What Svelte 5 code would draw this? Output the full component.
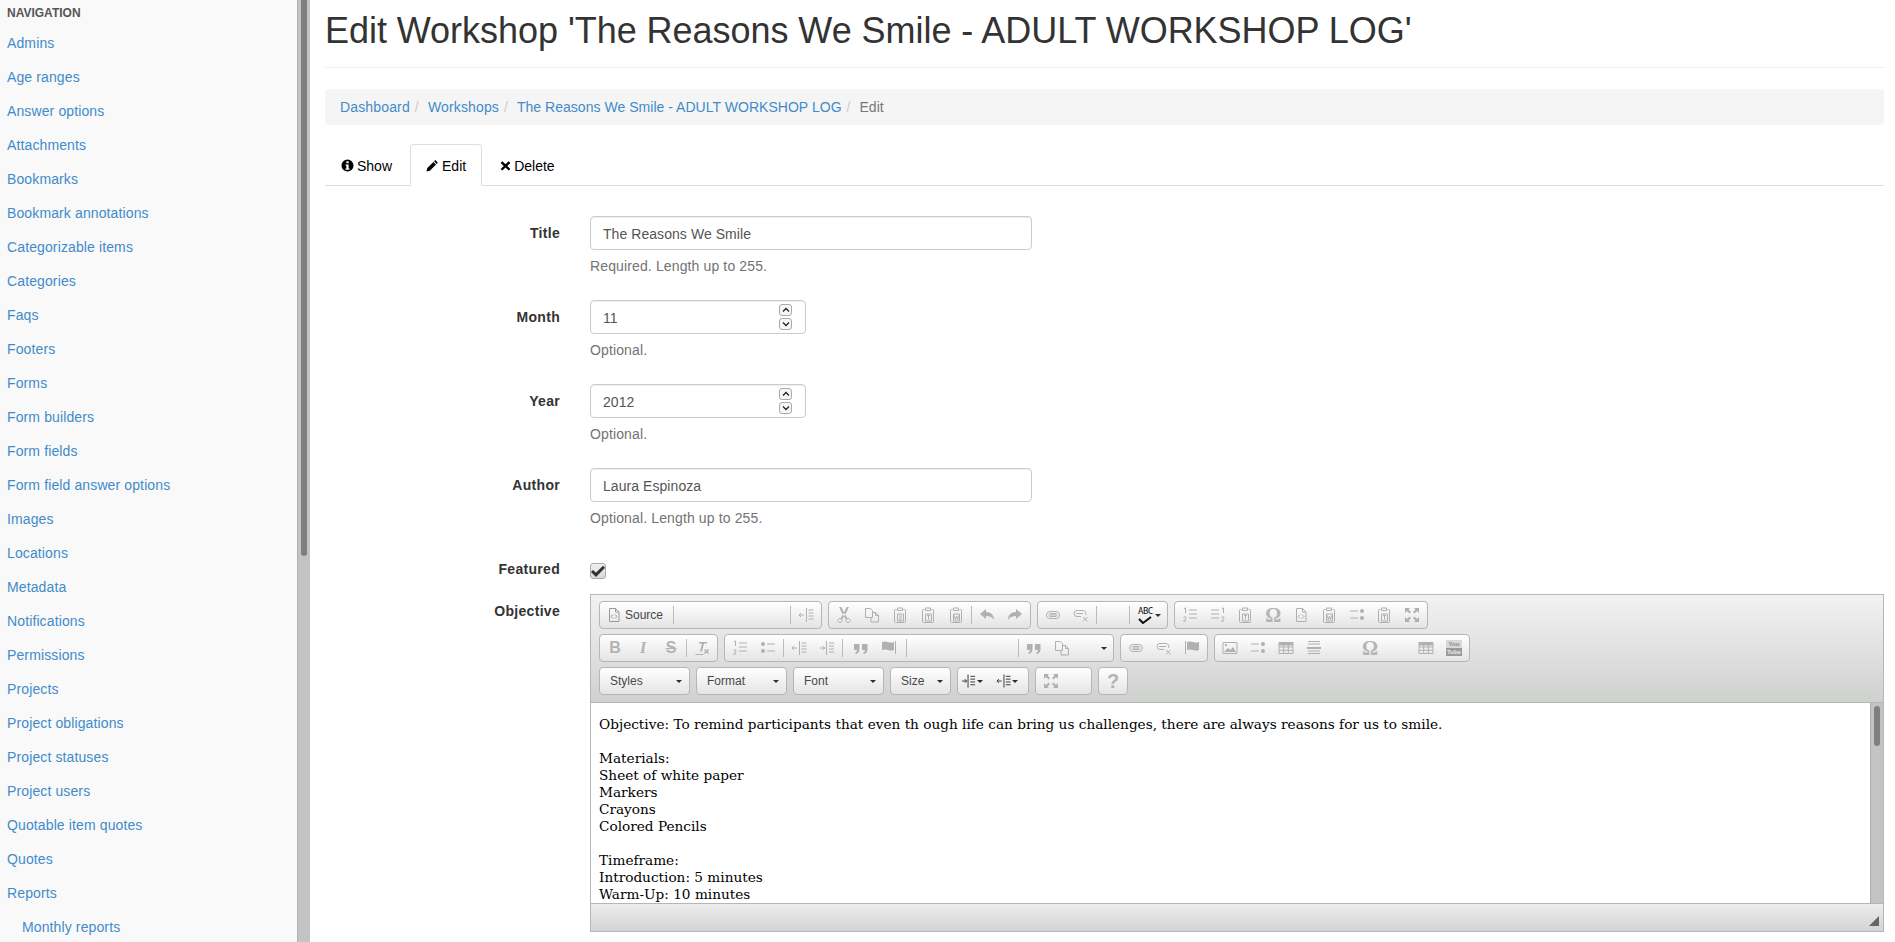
<script>
	const navItems = [
		'Admins', 'Age ranges', 'Answer options', 'Attachments', 'Bookmarks', 'Bookmark annotations',
		'Categorizable items', 'Categories', 'Faqs', 'Footers', 'Forms', 'Form builders', 'Form fields',
		'Form field answer options', 'Images', 'Locations', 'Metadata', 'Notifications', 'Permissions',
		'Projects', 'Project obligations', 'Project statuses', 'Project users', 'Quotable item quotes',
		'Quotes', 'Reports'
	];

	// s = stroked path, f = filled path, both on a 16x16 box
	const icons = {
		source: { s: 'M3.5 1.5h6l3.5 3.5v9.5h-9.5zM9.5 1.5v3.5h3.5M7 7.5l-2 2 2 2M9 7.5l2 2-2 2' },
		outdent: { s: 'M8.5 1v14M10.5 3h5M10.5 6h5M10.5 9h5M10.5 12h5M1 8h5M3 6l-2 2 2 2' },
		indent: { s: 'M7.5 1v14M10 3h5M10 6h5M10 9h5M10 12h5M1 8h5M4 6l2 2-2 2' },
		cut: {
			s: 'M4 11.500a2 2 0 1 0 .1 0zM12 11.500a2 2 0 1 0 .1 0z',
			f: 'M3 0l2-.5 3.500 7 3 5-1.500 1-3.500-5.500zM13 0l-2-.5-3.500 7-3 5 1.500 1 3.500-5.500z'
		},
		copy: { s: 'M1.500 1.500h5l2 2v7h-7zM8.500 5.500h3l3 3v6.500h-7.500v-4.500M11.500 5.500v3h3' },
		paste: { s: 'M4.500 2.500h-1a1 1 0 0 0-1 1v11a1 1 0 0 0 1 1h9a1 1 0 0 0 1-1v-11a1 1 0 0 0-1-1h-1M5.500 1h5v2.500h-5zM5.500 7h6v7h-6zM7 9h3M7 11h3M7 13h3' },
		pasteT: { s: 'M4.500 2.500h-1a1 1 0 0 0-1 1v11a1 1 0 0 0 1 1h9a1 1 0 0 0 1-1v-11a1 1 0 0 0-1-1h-1M5.500 1h5v2.500h-5zM5.500 7h6v7h-6zM7 8.500h3M8.500 8.500v4' },
		pasteW: { s: 'M4.500 2.500h-1a1 1 0 0 0-1 1v11a1 1 0 0 0 1 1h9a1 1 0 0 0 1-1v-11a1 1 0 0 0-1-1h-1M5.500 1h5v2.500h-5zM5.500 7h6v7h-6zM6.500 8.500l.8 4 1.200-3 1.200 3 .8-4' },
		undo: { f: 'M1 7l6-5v3c5 0 8 3 8 8-2-3-4-4-8-4v3z' },
		redo: { f: 'M15 7l-6-5v3c-5 0-8 3-8 8 2-3 4-4 8-4v3z' },
		link: { s: 'M5 4.500h6a3.500 3.500 0 0 1 0 7h-6a3.500 3.500 0 0 1 0-7zM3.500 8h9M4.500 6.500h7M4.500 9.500h7' },
		unlink: { s: 'M4 3.500h6a3 3 0 0 1 2.500 4.500M8 9.500h-4a3 3 0 0 1 0-6M3 6.500h7M10 10l4.500 4.500M14.500 10l-4.500 4.500' },
		ol: { s: 'M7 3h8M7 7h8M7 11h8M2 1.500l1.500-.5v5M1.500 10.500q2-1.500 2.500 0t-2.500 3.500h2.500' },
		ul: { s: 'M7 4h8M7 11h8', f: 'M1 4a2 2 0 1 0 4 0 2 2 0 1 0-4 0zM1 11a2 2 0 1 0 4 0 2 2 0 1 0-4 0z' },
		rtlOl: { s: 'M1 3h8M1 7h8M1 11h8M12 1.500l1.500-.5v5M11.500 10.500q2-1.500 2.500 0t-2.500 3.500h2.500' },
		rtlUl: { s: 'M1 4h8M1 11h8', f: 'M11 4a2 2 0 1 0 4 0 2 2 0 1 0-4 0zM11 11a2 2 0 1 0 4 0 2 2 0 1 0-4 0z' },
		flag: { s: 'M14.500 1v13', f: 'M1 2q3-1 6 0t6 0v8q-3 1-6 0t-6 0z' },
		flagR: { s: 'M1.500 1v13', f: 'M3 2q3-1 6 0t6 0v8q-3 1-6 0t-6 0z' },
		quote: { f: 'M1 4h5.500v5q0 4-3.500 5l-1-1q2-1 2-3h-3zM9 4h5.500v5q0 4-3.500 5l-1-1q2-1 2-3h-3z' },
		removeFormat: {
			s: 'M1.500 14.500h8',
			f: 'M5 2h8v1.500h-3l-2 8h-2l2-8h-3zM10 10l1-1 1.500 1.500 1.500-1.500 1 1-1.500 1.500 1.500 1.500-1 1-1.500-1.500-1.500 1.500-1-1 1.500-1.500z'
		},
		maximize: {
			f: 'M1 1h5l-1.500 1.500 2.500 2.500-1.500 1.500-2.500-2.500-2 2zM15 1h-5l1.500 1.500-2.500 2.500 1.500 1.500 2.500-2.500 2 2zM1 15h5l-1.500-1.500 2.500-2.500-1.500-1.500-2.500 2.500-2-2zM15 15h-5l1.500-1.500-2.500-2.500 1.500-1.500 2.500 2.500 2-2z'
		},
		image: { s: 'M1 2.500h14v11h-14z', f: 'M2 12l4-4 2.500 2 2.500-3 3 5zM3 4h2v2h-2z' },
		table: { s: 'M1 2.500h14v11h-14zM1 7h14M1 10.250h14M5.700 5v8.500M10.300 5v8.500', f: 'M1 2.500h14v3h-14z' },
		hr: { s: 'M2 1.500h12M2 4h12M2 11h12M2 13.500h12', f: 'M1 7h14v2h-14z' }
	};

	const glyphs = {
		bold: { t: 'B', c: 'g-bold' },
		italic: { t: 'I', c: 'g-italic' },
		strike: { t: 'S', c: 'g-strike' },
		omega: { t: 'Ω', c: 'g-omega' },
		help: { t: '?', c: 'g-help' }
	};

	// number = blank space, 'sep' = thin divider, anything else = a 28px button
	const rowOne = [
		{ items: ['source-label', 'sep', 114, 'sep', 'outdent'] },
		{ items: ['cut', 'copy', 'paste', 'pasteT', 'pasteW', 'sep', 'undo', 'redo'], width: 203 },
		{ items: ['link', 'unlink', 'sep', 30, 'sep', 'spell'], width: 131 },
		{ items: ['ol', 'rtlOl', 'pasteT', 'omega', 'source', 'pasteW', 'rtlUl', 'pasteT', 'maximize'], width: 254 }
	];
	const rowTwo = [
		{ items: ['bold', 'italic', 'strike', 'sep', 'removeFormat'] },
		{ items: ['ol', 'ul', 'sep', 'outdent', 'indent', 'sep', 3, 'quote', 'flag', 2, 'sep', 109, 'sep', 'quote', 'copy', 20, 'caret'] },
		{ items: ['link', 'unlink', 'flagR'] },
		{ items: ['image', 'rtlUl', 'table', 'hr', 28, 'omega', 28, 'table', 'youtube'] }
	];

	const combos = [
		{ label: 'Styles', width: 91 },
		{ label: 'Format', width: 91 },
		{ label: 'Font', width: 91 },
		{ label: 'Size', width: 61 }
	];

	const fields = [
		{ label: 'Title', value: 'The Reasons We Smile', help: 'Required. Length up to 255.' },
		{ label: 'Month', value: '11', help: 'Optional.', number: true },
		{ label: 'Year', value: '2012', help: 'Optional.', number: true },
		{ label: 'Author', value: 'Laura Espinoza', help: 'Optional. Length up to 255.' }
	];
</script>

{#snippet icon(name)}
	<svg class="ic" viewBox="0 0 16 16" width="16" height="16">
		{#if icons[name].s}<path d={icons[name].s} fill="none" stroke="currentColor" stroke-width="1" />{/if}
		{#if icons[name].f}<path d={icons[name].f} fill="currentColor" />{/if}
	</svg>
{/snippet}

{#snippet group(g)}
	<div class="group" style={g.width ? `width: ${g.width}px` : undefined}>
		{#each g.items as item}
			{#if typeof item === 'number'}
				<span style="width: {item}px"></span>
			{:else if item === 'sep'}
				<span class="sep"></span>
			{:else if item === 'source-label'}
				<span class="source-btn">{@render icon('source')}<span>Source</span></span>
			{:else if item === 'spell'}
				<span class="spell">
					<span class="abc">ABC</span>
					<svg class="tick" viewBox="0 0 14 8" width="14" height="8"><path d="M1 3l4 4 8-6" fill="none" stroke="#111" stroke-width="2" /></svg>
					<i class="caret"></i>
				</span>
			{:else if item === 'caret'}
				<span class="caret-wrap"><i class="caret"></i></span>
			{:else if item === 'youtube'}
				<span class="btn"><span class="yt"><b>You</b><b class="tube">Tube</b></span></span>
			{:else if glyphs[item]}
				<span class="btn"><span class={glyphs[item].c}>{glyphs[item].t}</span></span>
			{:else}
				<span class="btn">{@render icon(item)}</span>
			{/if}
		{/each}
	</div>
{/snippet}

<div class="page">
	<aside class="sidebar">
		<div class="nav-title">NAVIGATION</div>
		<ul class="nav">
			{#each navItems as item}
				<li><a href="#top">{item}</a></li>
			{/each}
			<li class="sub"><a href="#top">Monthly reports</a></li>
		</ul>
	</aside>
	<div class="page-scroll"><div class="page-thumb"></div></div>

	<main class="main">
		<h1>Edit Workshop 'The Reasons We Smile - ADULT WORKSHOP LOG'</h1>
		<ol class="breadcrumb">
			<li><a href="#top">Dashboard</a></li>
			<li><a href="#top">Workshops</a></li>
			<li><a href="#top">The Reasons We Smile - ADULT WORKSHOP LOG</a></li>
			<li class="current">Edit</li>
		</ol>

		<div class="tabs">
			<a class="tab" href="#top">
				<svg viewBox="0 0 14 14" width="13" height="13"><path fill-rule="evenodd" d="M7 .5a6.500 6.500 0 1 0 0 13 6.500 6.500 0 0 0 0-13zM5.800 2.500h2.400v2.200h-2.400zM5 6h3.200v4.200h1v1.300h-4.400v-1.300h1v-2.900h-.8z" fill="#000" /></svg>
				Show
			</a>
			<a class="tab active" href="#top">
				<svg viewBox="0 0 14 14" width="13" height="13"><path d="M10 1.200l2.800 2.800-1.300 1.300-2.800-2.800zM8 3.200l2.800 2.800-6.600 6.600-3.700.9.900-3.700z" fill="#000" /></svg>
				Edit
			</a>
			<a class="tab" href="#top">
				<svg viewBox="0 0 14 14" width="11" height="13"><path d="M3 1.500l4 4 4-4 2.200 2.200-4 3.800 4 3.800-2.200 2.200-4-4-4 4-2.200-2.200 4-3.800-4-3.800z" fill="#000" /></svg>
				Delete
			</a>
		</div>

		<form class="form">
			{#each fields as f}
				<div class="row">
					<label class="label" for={f.label}>{f.label}</label>
					<div class="control">
						<div class="input-wrap" class:short={f.number}>
							<input id={f.label} class="input" value={f.value} readonly />
							{#if f.number}
								<span class="spinner">
									<span><svg viewBox="0 0 8 6" width="8" height="6"><path d="M1 4.500l3-3 3 3" fill="none" stroke="#222" stroke-width="1.300" /></svg></span>
									<span><svg viewBox="0 0 8 6" width="8" height="6"><path d="M1 1.500l3 3 3-3" fill="none" stroke="#222" stroke-width="1.300" /></svg></span>
								</span>
							{/if}
						</div>
						<p class="help">{f.help}</p>
					</div>
				</div>
			{/each}

			<div class="row row-check">
				<span class="label">Featured</span>
				<div class="check">
					<svg viewBox="0 0 16 16" width="16" height="16"><path d="M2 8l4 3.800 8-8" fill="none" stroke="#2d3238" stroke-width="3" /></svg>
				</div>
			</div>

			<div class="row row-editor">
				<span class="label">Objective</span>
				<div class="editor">
					<div class="toolbar">
						<div class="tb-row">
							{#each rowOne as g}{@render group(g)}{/each}
						</div>
						<div class="tb-row">
							{#each rowTwo as g}{@render group(g)}{/each}
						</div>
						<div class="tb-row">
							{#each combos as c}
								<div class="combo" style="width: {c.width}px"><span>{c.label}</span><i class="caret"></i></div>
							{/each}
							<div class="group active-icons">
								<span class="drop">{@render icon('indent')}<i class="caret"></i></span>
								<span class="drop">{@render icon('outdent')}<i class="caret"></i></span>
							</div>
							<div class="group max-group"><span class="btn">{@render icon('maximize')}</span></div>
							<div class="group help-group"><span class="btn"><span class="g-help">?</span></span></div>
						</div>
					</div>
					<div class="content-wrap">
						<div class="content">
							<p>Objective: To remind participants that even th ough life can bring us challenges, there are always reasons for us to smile.</p>
							<p>Materials:<br />Sheet of white paper<br />Markers<br />Crayons<br />Colored Pencils</p>
							<p>Timeframe:<br />Introduction: 5 minutes<br />Warm-Up: 10 minutes</p>
						</div>
						<div class="content-scroll"><div class="content-thumb"></div></div>
					</div>
					<div class="bottom">
						<svg viewBox="0 0 10 10" width="10" height="10"><path d="M10 0v10h-10z" fill="#666" /></svg>
					</div>
				</div>
			</div>
		</form>
	</main>
</div>

<style>
	:global(body) {
		margin: 0;
		overflow: hidden;
		background: #fff;
	}

	.page {
		display: flex;
		height: 942px;
		overflow: hidden;
		font-family: "Liberation Sans", Arial, sans-serif;
		font-size: 14px;
		line-height: 20px;
		color: #333;
	}

	a {
		color: #428bca;
		text-decoration: none;
	}

	.sidebar {
		width: 297px;
		flex: none;
		background: #f9f9f9;
		box-sizing: border-box;
		padding: 3px 0 0 7px;
		overflow: hidden;
	}

	.nav-title {
		font-size: 12px;
		font-weight: 700;
		line-height: 20px;
		color: #555;
		margin-bottom: 3px;
	}

	.nav {
		list-style: none;
		margin: 0;
		padding: 0;
		letter-spacing: 0.12px;
	}

	.nav li {
		height: 34px;
		line-height: 34px;
	}

	.nav .sub {
		padding-left: 15px;
	}

	.page-scroll {
		width: 13px;
		flex: none;
		background: #c2c4c3;
		border-left: 1px solid #b0b0b0;
		box-sizing: border-box;
		padding: 0 3px 0 3px;
	}

	.page-thumb {
		height: 556px;
		background: #7e807f;
		border-radius: 0 0 3px 3px;
	}

	.main {
		flex: 1;
		min-width: 0;
		padding: 0 11px 0 15px;
	}

	h1 {
		font-size: 36px;
		font-weight: 500;
		line-height: 40px;
		letter-spacing: -0.04px;
		margin: 0 0 21px;
		padding: 11px 0 16px;
		border-bottom: 1px solid #eee;
		color: #333;
	}

	.breadcrumb {
		display: flex;
		list-style: none;
		margin: 0 0 19px;
		padding: 8px 15px;
		background: #f5f5f5;
		border-radius: 4px;
		letter-spacing: 0.03px;
	}

	.breadcrumb li + li::before {
		content: "/";
		color: #ccc;
		padding: 0 9px 0 5px;
	}

	.breadcrumb li:nth-child(-n + 2) {
		letter-spacing: 0.15px;
	}

	.breadcrumb .current {
		color: #777;
	}

	.tabs {
		display: flex;
		height: 42px;
		box-sizing: border-box;
		border-bottom: 1px solid #ddd;
		margin-bottom: 30px;
	}

	.tab {
		display: flex;
		align-items: center;
		gap: 3px;
		height: 42px;
		box-sizing: border-box;
		padding: 1px 15px 0;
		margin-right: 2px;
		color: #000;
		border: 1px solid transparent;
		border-radius: 4px 4px 0 0;
	}

	.tab.active {
		background: #fff;
		border-color: #ddd #ddd #fff;
	}

	.row {
		display: grid;
		grid-template-columns: 235px 1fr;
		column-gap: 30px;
		margin-bottom: 15px;
	}

	.label {
		font-weight: 700;
		text-align: right;
		padding-top: 7px;
		letter-spacing: 0.3px;
		color: #333;
	}

	.input-wrap {
		position: relative;
		width: 442px;
	}

	.input-wrap.short {
		width: 216px;
	}

	.input {
		display: block;
		width: 100%;
		height: 34px;
		box-sizing: border-box;
		padding: 7px 12px 5px;
		font: inherit;
		letter-spacing: 0.06px;
		color: #555;
		border: 1px solid #ccc;
		border-radius: 4px;
		outline: none;
		box-shadow: inset 0 1px 1px rgba(0, 0, 0, 0.075);
	}

	.spinner {
		position: absolute;
		top: 4px;
		right: 14px;
		display: flex;
		flex-direction: column;
		gap: 2px;
	}

	.spinner span {
		display: flex;
		align-items: center;
		justify-content: center;
		width: 11px;
		height: 10px;
		border: 1px solid #aaa;
		border-radius: 3px;
		background: #f6f6f6;
	}

	.help {
		margin: 6px 0 9px;
		color: #737373;
		letter-spacing: 0.13px;
	}

	.row-check {
		height: 27px;
		margin-bottom: 15px;
	}

	.check {
		width: 16px;
		height: 16px;
		margin-top: 11px;
		box-sizing: border-box;
		display: flex;
		align-items: center;
		justify-content: center;
		border: 1px solid #aaa;
		border-radius: 3px;
		background: linear-gradient(#f0f0f0, #d8d8d8);
	}

	.check svg {
		flex: none;
	}

	.row-editor {
		margin: 0;
	}

	.editor {
		width: 1294px;
		height: 338px;
		box-sizing: border-box;
		border: 1px solid #b6b6b6;
		display: flex;
		flex-direction: column;
	}

	.toolbar {
		height: 108px;
		box-sizing: border-box;
		padding: 6px 8px 0;
		background: linear-gradient(#f2f2f2, #cfd1cf);
		border-bottom: 1px solid #b6b6b6;
		display: flex;
		flex-direction: column;
		gap: 5px;
	}

	.tb-row {
		display: flex;
		gap: 6px;
		height: 28px;
	}

	.group,
	.combo {
		display: flex;
		align-items: center;
		height: 28px;
		box-sizing: border-box;
		border: 1px solid #b6b6b6;
		border-radius: 4px;
		background: linear-gradient(#fff, #e4e4e4);
		padding: 0 1px;
	}

	.btn {
		display: flex;
		align-items: center;
		justify-content: center;
		width: 28px;
		height: 26px;
		color: #b0b0b0;
	}

	.sep {
		width: 1px;
		height: 18px;
		margin: 0 1px;
		background: #bcbcbc;
	}

	.ic {
		display: block;
		flex: none;
	}

	.source-btn {
		display: flex;
		align-items: center;
		gap: 3px;
		width: 71px;
		padding-left: 5px;
		box-sizing: border-box;
		font-size: 12px;
		color: #474747;
	}

	.source-btn .ic {
		color: #9a9a9a;
	}

	.spell {
		position: relative;
		width: 34px;
		height: 26px;
		display: block;
		color: #111;
	}

	.abc {
		position: absolute;
		left: 7px;
		top: 3px;
		font: 9px/12px "DejaVu Sans Mono", monospace;
		letter-spacing: -0.5px;
	}

	.tick {
		position: absolute;
		left: 7px;
		top: 14px;
	}

	.spell .caret {
		position: absolute;
		left: 24px;
		top: 12px;
	}

	.caret-wrap {
		display: flex;
		justify-content: center;
		width: 16px;
	}

	.caret {
		display: block;
		flex: none;
		width: 0;
		height: 0;
		border: 3px solid transparent;
		border-top-color: #2d2d2d;
		border-bottom: 0;
	}

	.g-bold,
	.g-italic,
	.g-strike,
	.g-help,
	.g-omega {
		font-weight: 700;
		font-size: 16px;
		color: #b4b4b4;
	}

	.g-italic {
		font-family: "Liberation Serif", serif;
		font-style: italic;
		font-size: 17px;
	}

	.g-strike {
		text-decoration: line-through;
	}

	.g-omega {
		font-family: "Liberation Serif", serif;
		font-size: 20px;
	}

	.g-help {
		font-size: 20px;
	}

	.yt {
		display: flex;
		flex-direction: column;
		align-items: center;
		width: 16px;
		height: 16px;
		background: #d8d8d8;
		font-size: 6px;
		line-height: 8px;
		color: #888;
	}

	.yt .tube {
		width: 100%;
		text-align: center;
		background: #9a9a9a;
		color: #e8e8e8;
	}

	.combo {
		justify-content: space-between;
		padding: 0 7px 0 10px;
		font-size: 12px;
		color: #484848;
	}

	.active-icons {
		width: 72px;
		padding-left: 3px;
		justify-content: flex-start;
		gap: 3px;
		color: #333;
	}

	.drop {
		display: flex;
		align-items: center;
		gap: 1px;
		width: 32px;
	}

	.drop .ic {
		width: 15px;
	}

	.max-group {
		width: 57px;
	}

	.help-group {
		width: 30px;
		padding: 0;
	}

	.content-wrap {
		flex: 1;
		min-height: 0;
		display: flex;
		background: #fff;
		border-bottom: 1px solid #b6b6b6;
	}

	.content {
		flex: 1;
		min-width: 0;
		padding: 13px 8px 0;
		box-sizing: border-box;
		font-family: "DejaVu Serif", serif;
		font-size: 13.65px;
		line-height: 17px;
		color: #000;
	}

	.content p {
		margin: 0 0 17px;
	}

	.content p:last-child {
		margin: 0;
	}

	.content-scroll {
		width: 13px;
		flex: none;
		background: #c2c4c3;
		border-left: 1px solid #adadad;
		box-sizing: border-box;
		padding: 3px 3px 0;
	}

	.content-thumb {
		height: 40px;
		background: #7e807f;
		border-radius: 3px;
	}

	.bottom {
		height: 27px;
		flex: none;
		display: flex;
		align-items: flex-end;
		justify-content: flex-end;
		padding: 0 4px 5px 0;
		box-sizing: border-box;
		background: linear-gradient(#ececec, #d4d4d4);
	}
</style>
